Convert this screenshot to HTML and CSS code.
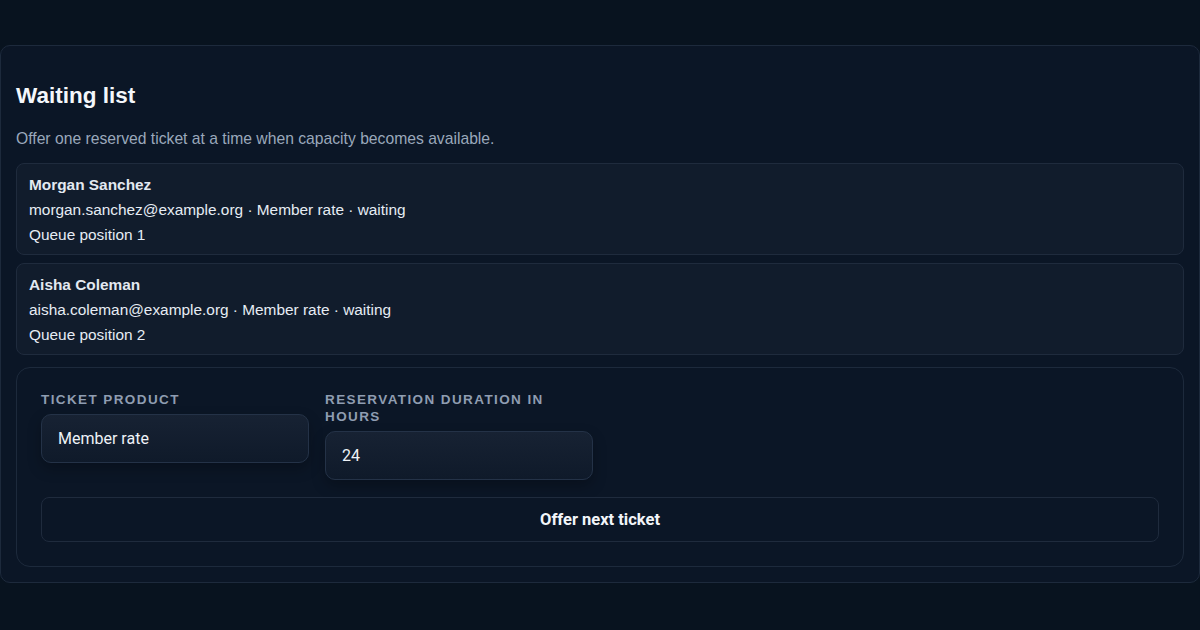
FILE: index.html
```html
<!DOCTYPE html>
<html lang="en">
<head>
  <meta charset="UTF-8">
  <title>Waiting list</title>
  <link rel="stylesheet" href="styles.css">
</head>
<body>
  <section class="panel">
    <h2>Waiting list</h2>
    <p class="lead">Offer one reserved ticket at a time when capacity becomes available.</p>

    <div class="entry">
      <strong>Morgan Sanchez</strong>
      <span>morgan.sanchez@example.org · Member rate · waiting</span>
      <span>Queue position 1</span>
    </div>
    <div class="entry">
      <strong>Aisha Coleman</strong>
      <span>aisha.coleman@example.org · Member rate · waiting</span>
      <span>Queue position 2</span>
    </div>

    <form class="offer" onsubmit="return false">
      <div class="fields">
        <label class="field">
          <span class="label">Ticket product</span>
          <input type="text" value="Member rate">
        </label>
        <label class="field">
          <span class="label">Reservation duration in hours</span>
          <input type="text" value="24">
        </label>
      </div>
      <button type="submit">Offer next ticket</button>
    </form>
  </section>
</body>
</html>
```

FILE: styles.css
```css
body {
  margin: 0;
  padding: 45px 0 47px;
  background: #08131f;
  color: #e6ecf4;
  font-family: "Liberation Sans", Arial, sans-serif;
}
.panel {
  background: #0b1626;
  border: 1px solid #1d2a3c;
  border-radius: 10px;
  padding: 36px 15px 15px;
}
h2 {
  margin: 0;
  font-size: 22.5px;
  line-height: 27px;
  color: #f4f7fb;
}
.lead {
  margin: 19px 0 13px;
  font-size: 15.7px;
  line-height: 22px;
  color: #9aa8bb;
}
.entry {
  display: flex;
  flex-direction: column;
  background: #111c2c;
  border: 1px solid #1f2b3d;
  border-radius: 8px;
  padding: 8px 12px 7px;
  margin-bottom: 8px;
  font-size: 15.4px;
  line-height: 25px;
}
.entry strong {
  color: #e3e9f1;
}
.offer {
  margin-top: 12px;
  border: 1px solid #1d2a3c;
  border-radius: 14px;
  padding: 23px 24px 24px;
}
.fields {
  display: flex;
  gap: 16px;
  align-items: flex-start;
  margin-bottom: 17px;
}
.field {
  width: 268px;
  display: flex;
  flex-direction: column;
  gap: 6px;
}
.label {
  text-transform: uppercase;
  font-size: 13.5px;
  font-weight: bold;
  letter-spacing: 1.4px;
  line-height: 17px;
  color: #8f9db1;
}
input {
  box-sizing: border-box;
  height: 49px;
  padding: 0 16px;
  border: 1px solid #243247;
  border-radius: 10px;
  background: linear-gradient(#172233, #0f1a2a);
  box-shadow: 0 6px 14px rgba(0, 0, 0, 0.25);
  color: #eef2f7;
  font-family: Roboto, sans-serif;
  font-size: 16px;
}
button {
  width: 100%;
  height: 45px;
  border: 1px solid #1f2b3d;
  border-radius: 8px;
  background: #0b1626;
  color: #f2f5f9;
  font-family: Roboto, sans-serif;
  font-size: 16.5px;
  font-weight: bold;
}
```
